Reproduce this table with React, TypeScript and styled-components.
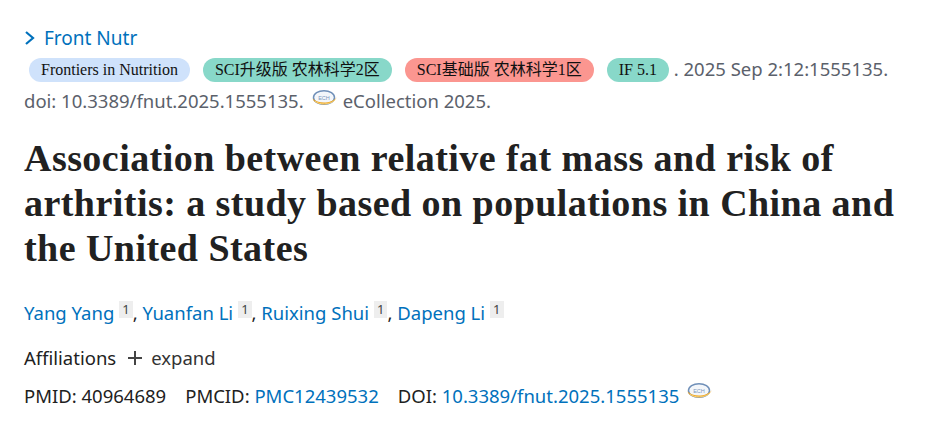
import React from 'react';
import styled, { createGlobalStyle } from 'styled-components';

const GlobalStyle = createGlobalStyle`
  body {
    margin: 0;
    background: #ffffff;
    font-family: "Noto Sans", "Liberation Sans", sans-serif;
    color: #212121;
  }
`;

const Page = styled.main`
  padding: 24px 24px 0 24px;
  width: 944px;
  box-sizing: border-box;
`;

const JournalLink = styled.a`
  display: inline-flex;
  align-items: center;
  gap: 9px;
  color: #0071bc;
  font-size: 19px;
  line-height: 28px;
  text-decoration: none;
`;

const Citation = styled.div`
  margin-top: 1px;
  color: #5b616b;
  font-size: 18.5px;
  line-height: 32px;
`;

const Badge = styled.span<{ $bg: string }>`
  display: inline-block;
  background: ${(p) => p.$bg};
  color: #111;
  font-family: "Liberation Serif", "Noto Sans CJK SC", serif;
  font-size: 16px;
  line-height: 24px;
  padding: 0 12px;
  border-radius: 12px;
  margin-left: 13px;
  vertical-align: 1px;
  &:first-child {
    margin-left: 5px;
  }
`;

const Title = styled.h1`
  margin: 19px 0 0 0;
  font-family: "Liberation Serif", "DejaVu Serif", serif;
  font-weight: 700;
  font-size: 38px;
  line-height: 45px;
  color: #212121;
  letter-spacing: 0.45px;
`;

const Authors = styled.div`
  margin-top: 28px;
  font-size: 18.5px;
  line-height: 28px;
  color: #212121;
`;

const Author = styled.a`
  color: #0071bc;
  text-decoration: none;
`;

const Sup = styled.sup`
  display: inline-block;
  background: #eeeeee;
  color: #444;
  font-size: 13px;
  line-height: 17px;
  padding: 0 3px;
  margin-left: 5px;
  vertical-align: 6px;
`;

const Affiliations = styled.div`
  margin-top: 17px;
  display: flex;
  align-items: center;
  gap: 11px;
  font-size: 18.5px;
  line-height: 28px;
`;

const Expand = styled.span`
  display: inline-flex;
  align-items: center;
  gap: 8px;
  color: #333;
`;

const Ids = styled.div`
  margin-top: 10px;
  display: flex;
  align-items: baseline;
  gap: 19px;
  font-size: 18.5px;
  line-height: 28px;
`;

const IdLink = styled.a`
  color: #0071bc;
  text-decoration: none;
`;

const ECollection = ({ align }: { align: string }) => (
  <svg width="27" height="20" viewBox="0 0 27 20" style={{ verticalAlign: align, margin: '0 5px 0 7px' }}>
    <ellipse cx="13" cy="8.5" rx="10.5" ry="6.8" fill="#f3f6fa" stroke="#6f8fb8" strokeWidth="1.5" />
    <text x="13" y="11" fontSize="5.5" textAnchor="middle" fill="#7b98bd" fontFamily="Liberation Sans, sans-serif">ECH</text>
    <path d="M1.5 9.5 C4 17, 21 18, 26 8 C22 14.5, 7 15.5, 1.5 9.5 Z" fill="#f0a41c" />
    <path d="M4 12 C8 16, 19 16, 24 11" fill="none" stroke="#f7d27a" strokeWidth="1" />
  </svg>
);

const Chevron = () => (
  <svg width="11" height="16" viewBox="0 0 11 16">
    <path d="M2 2 L9 8 L2 14" fill="none" stroke="#0071bc" strokeWidth="2.2" />
  </svg>
);

const Plus = () => (
  <svg width="16" height="16" viewBox="0 0 16 16">
    <path d="M8 1 V15 M1 8 H15" stroke="#444" strokeWidth="2" />
  </svg>
);

const authors = ['Yang Yang', 'Yuanfan Li', 'Ruixing Shui', 'Dapeng Li'];

export default function App() {
  return (
    <>
      <GlobalStyle />
      <Page>
        <JournalLink href="#">
          <Chevron />
          Front Nutr
        </JournalLink>
        <Citation>
          <Badge $bg="#cfe2fb">Frontiers in Nutrition</Badge>
          <Badge $bg="#88d8c9">SCI升级版 农林科学2区</Badge>
          <Badge $bg="#fb9690">SCI基础版 农林科学1区</Badge>
          <Badge $bg="#88d8c9">IF 5.1</Badge>
          {' '}. 2025 Sep 2:12:1555135.
          <br />
          doi: 10.3389/fnut.2025.1555135.
          <ECollection align="-1px" />
          eCollection 2025.
        </Citation>
        <Title>
          Association between relative fat mass and risk of arthritis: a study based on populations in China and
          the United States
        </Title>
        <Authors>
          {authors.map((a, i) => (
            <React.Fragment key={a}>
              <Author href="#">{a}</Author>
              <Sup>1</Sup>
              {i < authors.length - 1 ? ', ' : ''}
            </React.Fragment>
          ))}
        </Authors>
        <Affiliations>
          Affiliations
          <Expand>
            <Plus />
            expand
          </Expand>
        </Affiliations>
        <Ids>
          <span>PMID: 40964689</span>
          <span>
            PMCID: <IdLink href="#">PMC12439532</IdLink>
          </span>
          <span>
            DOI: <IdLink href="#">10.3389/fnut.2025.1555135</IdLink>
            <ECollection align="top" />
          </span>
        </Ids>
      </Page>
    </>
  );
}
